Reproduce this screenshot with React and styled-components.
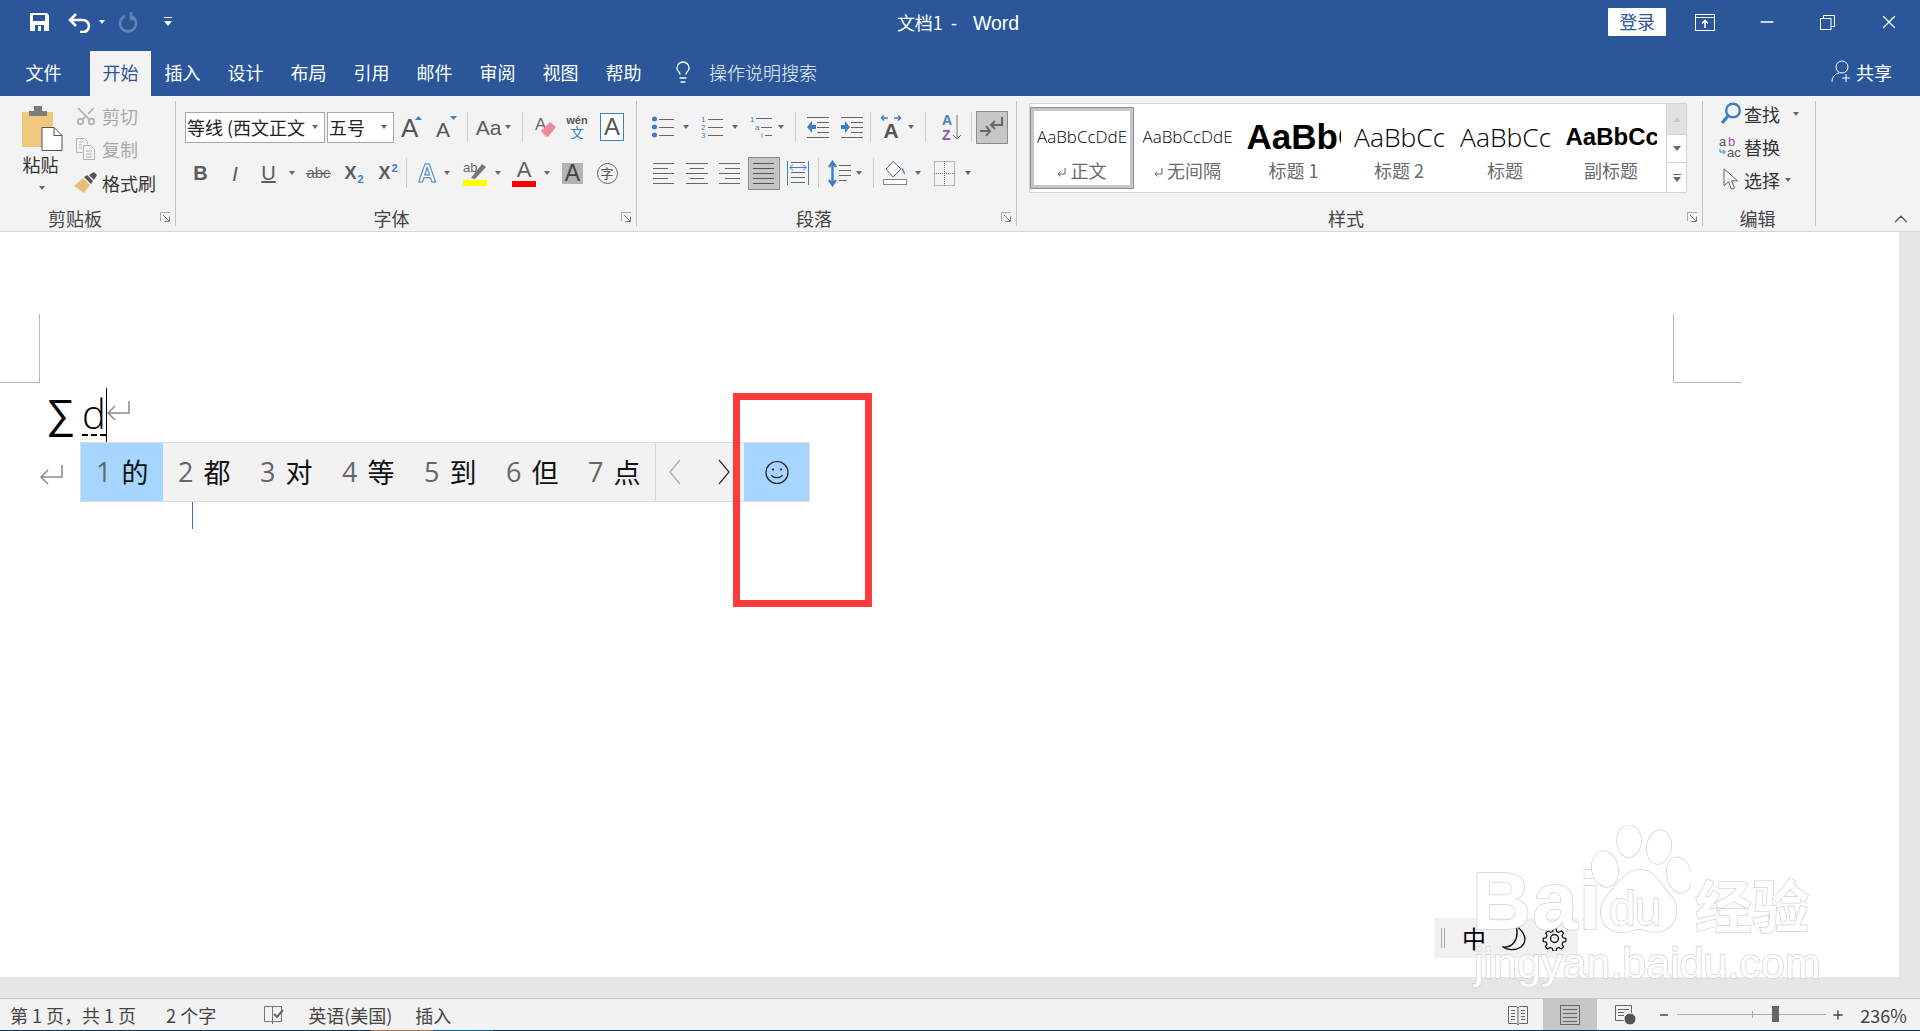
import React from "react";
import styled, { createGlobalStyle } from "styled-components";
import { Scissors, Lightbulb, ChevronUp, Minus, Plus, X } from "lucide-react";

const CJK = `"Noto Sans CJK SC", "Liberation Sans", sans-serif`;
const LATIN = `"Liberation Sans", "Noto Sans CJK SC", sans-serif`;
const LIGHT = `"Open Sans", "Liberation Sans", sans-serif`;
const BLUE = "#2b579a";
const GREY = "#5c5c5c";
const ACCENT = "#3f7fc1";

const GlobalStyle = createGlobalStyle`
	html, body {
		margin: 0;
		padding: 0;
		height: 100%;
		background: #fff;
		overflow: hidden;
	}
	#root {
		height: 100%;
	}
`;

const Window = styled.div`
	width: 1920px;
	height: 1031px;
	display: flex;
	flex-direction: column;
	overflow: hidden;
	font-family: ${CJK};
	color: #444;
`;

const TitleBar = styled.div`
	height: 51px;
	background: ${BLUE};
	color: #fff;
	display: grid;
	grid-template-columns: 1fr auto 1fr;
	align-items: center;
`;
const QuickAccess = styled.div`
	display: flex;
	align-items: center;
	height: 44px;
	padding-left: 29px;
	margin-top: -7px;
`;
const WindowTitle = styled.div`
	display: flex;
	align-items: baseline;
	font-size: 18px;
	margin-top: -7px;
	margin-left: -4px;
`;
const TitleDash = styled.span`
	font-family: ${LATIN};
	margin: 0 16px 0 8px;
`;
const TitleApp = styled.span`
	font-family: ${LATIN};
	font-size: 19.5px;
`;
const WindowControls = styled.div`
	display: flex;
	align-items: center;
	justify-content: flex-start;
	margin-top: -7px;
	padding-left: 589px;
`;
const LoginButton = styled.div`
	width: 58px;
	height: 28px;
	margin-top: -1px;
	border-radius: 1px;
	background: #fff;
	color: ${BLUE};
	font-size: 18px;
	line-height: 27px;
	text-align: center;
`;

const TabBar = styled.div`
	height: 45px;
	background: ${BLUE};
	display: flex;
	align-items: stretch;
	padding-left: 12px;
`;
const Tab = styled.div`
	width: ${(p) => p.$w || 63}px;
	margin-right: ${(p) => p.$mr || 0}px;
	margin-left: ${(p) => p.$ml || 0}px;
	background: ${(p) => (p.$active ? "#f3f3f3" : "transparent")};
	color: ${(p) => (p.$active ? BLUE : "#fff")};
	font-size: 18px;
	line-height: 43px;
	text-align: center;
`;
const TellMe = styled.div`
	display: flex;
	align-items: center;
	margin-left: 16px;
	color: #f2f5fa;
	font-size: 18px;
	font-weight: 300;
	gap: 14px;
	margin-top: -4px;
`;
const ShareButton = styled.div`
	margin-left: auto;
	margin-right: 28px;
	display: flex;
	align-items: center;
	gap: 3px;
	color: #fff;
	font-size: 18px;
	margin-top: -4px;
`;

const Ribbon = styled.div`
	height: 135px;
	background: #f3f3f3;
	border-bottom: 1px solid #d6d6d6;
	display: flex;
	box-sizing: content-box;
`;
const Group = styled.div`
	position: relative;
	width: ${(p) => p.$w}px;
	display: flex;
	flex-direction: column;
	flex-shrink: 0;
	&::after {
		content: "";
		position: absolute;
		top: 5px;
		bottom: 5px;
		right: 0;
		width: 1px;
		background: #c2c2c2;
	}
`;
const GroupBody = styled.div`
	height: 109px;
	padding-top: ${(p) => p.$pt ?? 14}px;
	padding-left: ${(p) => p.$pl || 0}px;
	box-sizing: border-box;
	display: ${(p) => (p.$row ? "flex" : "block")};
`;
const GroupFooter = styled.div`
	height: 26px;
	display: grid;
	grid-template-columns: 1fr auto 1fr;
	align-items: center;
	font-size: 18px;
	color: #444;
`;
const GroupLabel = styled.div`
	grid-column: 2;
	line-height: 26px;
	transform: translateX(${(p) => p.$dx || 0}px);
`;
const LauncherSlot = styled.div`
	grid-column: 3;
	justify-self: end;
	display: flex;
	margin-right: 5px;
	margin-bottom: 2px;
`;

const ToolRow = styled.div`
	height: 34px;
	display: flex;
	align-items: center;
	padding-left: ${(p) => p.$pl || 0}px;
	margin-bottom: 12px;
`;
const Tool = styled.span`
	width: ${(p) => p.$w}px;
	margin-left: ${(p) => p.$ml || 0}px;
	flex-shrink: 0;
	display: inline-flex;
	align-items: center;
	justify-content: center;
	box-sizing: border-box;
	height: ${(p) => (p.$pressed ? "33px" : "auto")};
	background: ${(p) => (p.$pressed ? "#c6c6c6" : "transparent")};
	border: ${(p) => (p.$pressed ? "1px solid #8b8b8b" : "0")};
`;
const Caret = styled.span`
	width: 0;
	height: 0;
	flex-shrink: 0;
	margin-left: ${(p) => p.$ml || 0}px;
	border-left: 3.5px solid transparent;
	border-right: 3.5px solid transparent;
	border-top: 4px solid ${(p) => p.$color || "#666"};
`;
const Sep = styled.span`
	width: 1px;
	height: 30px;
	flex-shrink: 0;
	background: #cfcfcf;
	margin-left: ${(p) => p.$ml || 0}px;
`;
const Glyph = styled.span`
	font-family: ${LATIN};
	font-size: ${(p) => p.$size || 20}px;
	font-weight: ${(p) => (p.$bold ? 700 : 400)};
	font-style: ${(p) => (p.$italic ? "italic" : "normal")};
	color: ${(p) => p.$color || GREY};
	line-height: 1;
	text-decoration: ${(p) => p.$deco || "none"};
	white-space: nowrap;
`;
const Sub = styled.span`
	font-size: 11px;
	font-weight: 700;
	color: ${ACCENT};
	position: relative;
	top: ${(p) => p.$top}px;
	margin-left: 1px;
`;
const BoxedA = styled(Glyph)`
	width: 24px;
	height: 28px;
	box-sizing: border-box;
	border: 1px solid ${ACCENT};
	background: #fff;
	text-align: center;
	line-height: 26px;
	font-size: 24px;
	color: #555;
`;
const ShadedA = styled(Glyph)`
	width: 21px;
	height: 21px;
	background: #b3b3b3;
	text-align: center;
	line-height: 21px;
	font-size: 23px;
	color: #444;
`;
const CircledChar = styled.span`
	width: 21px;
	height: 21px;
	border-radius: 50%;
	box-sizing: border-box;
	border: 1px solid #666;
	font-size: 13px;
	line-height: 18px;
	text-align: center;
	color: #555;
`;
const ColorA = styled.span`
	display: flex;
	flex-direction: column;
	align-items: center;
	width: 24px;
`;
const ColorBar = styled.span`
	width: 24px;
	height: 6px;
	background: ${(p) => p.$color};
`;
const ComboBox = styled.div`
	width: ${(p) => p.$w}px;
	height: 31px;
	margin-left: ${(p) => p.$ml || 0}px;
	box-sizing: border-box;
	border: 1px solid #a6a6a6;
	background: #fff;
	display: flex;
	align-items: center;
	justify-content: space-between;
	padding: 0 6px 0 1px;
	font-size: 18px;
	line-height: 29px;
	color: #222;
	white-space: nowrap;
	flex-shrink: 0;
`;

const PasteColumn = styled.div`
	width: 60px;
	margin-left: 12px;
	display: flex;
	flex-direction: column;
	align-items: center;
	padding-top: 6px;
	font-size: 18px;
	color: #333;
`;
const PasteLabel = styled.div`
	line-height: 24px;
	margin: 1px 3px 10px 0;
`;
const ClipList = styled.div`
	margin-left: 2px;
	display: flex;
	flex-direction: column;
`;
const ClipRow = styled.div`
	height: 33.5px;
	display: flex;
	align-items: center;
	gap: 4px;
	font-size: 18px;
	color: ${(p) => (p.$disabled ? "#a8a8a8" : "#333")};
	margin-top: -1px;
	margin-bottom: 1px;
`;
const ClipIcon = styled.span`
	width: 24px;
	display: flex;
	justify-content: center;
`;

const Gallery = styled.div`
	margin-left: 12px;
	margin-top: -7px;
	width: 658px;
	height: 90px;
	display: flex;
	box-sizing: border-box;
	border: 1px solid #d2d2d2;
	background: #fff;
`;
const StyleItem = styled.div`
	width: ${(p) => p.$w}px;
	flex-shrink: 0;
	box-sizing: border-box;
	border: ${(p) => (p.$selected ? "4px solid #c6c6c6" : "0")};
	outline: ${(p) => (p.$selected ? "1px solid #8f8f8f" : "none")};
	outline-offset: -1px;
	margin-top: ${(p) => (p.$selected ? "3px" : "0")};
	height: ${(p) => (p.$selected ? "82px" : "100%")};
	padding-top: ${(p) => (p.$selected ? "11px" : "18px")};
	text-align: center;
	overflow: hidden;
`;
const StyleSample = styled.div`
	font-family: ${(p) => (p.$bold ? LATIN : LIGHT)};
	font-size: ${(p) => p.$size}px;
	font-weight: ${(p) => (p.$bold ? 700 : 300)};
	color: #000;
	height: 30px;
	line-height: 30px;
	white-space: nowrap;
	overflow: hidden;
	width: ${(p) => p.$clip || 92}px;
	margin: 0 auto;
	text-align: left;
`;
const StyleLabel = styled.div`
	font-size: 18px;
	line-height: 26px;
	margin-top: 5px;
	color: #6a6a6a;
	white-space: nowrap;
`;
const GalleryScroll = styled.div`
	margin-left: auto;
	width: 20px;
	display: flex;
	flex-direction: column;
	flex-shrink: 0;
`;
const ScrollCell = styled.div`
	height: ${(p) => p.$h}px;
	box-sizing: border-box;
	display: flex;
	flex-direction: column;
	align-items: center;
	justify-content: center;
	gap: 2px;
	border-left: 1px solid #d2d2d2;
	border-bottom: ${(p) => (p.$last ? "0" : "1px solid #d2d2d2")};
	background: ${(p) => (p.$disabled ? "#e2e2e2" : "#fff")};
`;
const TriUp = styled.span`
	border-left: 4px solid transparent;
	border-right: 4px solid transparent;
	border-bottom: 5px solid #c8c8c8;
`;
const TriDown = styled(Caret)`
	border-left-width: 4px;
	border-right-width: 4px;
	border-top-width: 5px;
`;
const Dash = styled.span`
	width: 8px;
	height: 1px;
	background: #666;
`;

const EditList = styled.div`
	display: flex;
	flex-direction: column;
	margin-left: 14px;
`;
const EditRow = styled.div`
	height: 33px;
	display: flex;
	align-items: center;
	font-size: 18px;
	color: #333;
`;
const EditIcon = styled.span`
	width: 27px;
	display: flex;
	justify-content: center;
`;
const CollapseSlot = styled.div`
	margin-left: auto;
	align-self: flex-end;
	margin-right: 8px;
	margin-bottom: 1px;
	display: flex;
	color: #555;
`;

const DocArea = styled.div`
	flex: 1;
	display: flex;
	flex-direction: column;
	min-height: 0;
	position: relative;
`;
const DocMain = styled.div`
	flex: 1;
	display: flex;
	min-height: 0;
`;
const Page = styled.div`
	flex: 1;
	background: #fff;
	padding: 166px 0 0 46px;
	box-sizing: border-box;
`;
const ScrollGutter = styled.div`
	width: 21px;
	background: #e6e6e6;
`;
const BottomGutter = styled.div`
	height: 21px;
	background: #e6e6e6;
`;
const CropMark = styled.div`
	position: absolute;
	top: 82px;
	width: 40px;
	height: 69px;
	box-sizing: border-box;
	border-bottom: 1px solid #b8b8b8;
	${(p) =>
		p.$right
			? "left: 1673px; width: 69px; border-left: 1px solid #b8b8b8;"
			: "left: 0; border-right: 1px solid #b8b8b8;"}
`;
const MathLine = styled.div`
	display: flex;
	align-items: flex-start;
	height: 52px;
`;
const Sigma = styled.span`
	font-family: ${LATIN};
	font-size: 41px;
	line-height: 33px;
	color: #000;
	width: 36px;
`;
const Composing = styled.span`
	font-family: ${LIGHT};
	font-weight: 300;
	font-size: 40px;
	line-height: 31px;
	color: #000;
	width: 24px;
	height: 38px;
	box-sizing: border-box;
	border-bottom: 2px dashed #000;
	text-align: center;
`;
const Caretbar = styled.span`
	width: 1px;
	height: 54px;
	background: #000;
	margin-top: -10px;
`;
const ReturnMark = styled.span`
	display: flex;
	margin-left: ${(p) => p.$ml || 0}px;
	margin-top: ${(p) => p.$mt || 0}px;
`;
const ImeReturnSlot = styled.div`
	position: absolute;
	left: 40px;
	top: 233px;
	display: flex;
`;
const ImeBar = styled.div`
	position: absolute;
	left: 80px;
	top: 210px;
	height: 60px;
	width: 730px;
	box-sizing: border-box;
	display: flex;
	background: #f2f2f2;
	border: 1px solid #dedede;
`;
const Candidate = styled.div`
	width: ${(p) => p.$w || 82}px;
	flex-shrink: 0;
	box-sizing: border-box;
	padding-left: ${(p) => p.$pl ?? 15}px;
	background: ${(p) => (p.$active ? "#a6d6ff" : "transparent")};
	display: flex;
	align-items: center;
	gap: 10px;
	font-size: 27px;
	line-height: 54px;
	color: #111;
`;
const CandidateNum = styled.span`
	font-family: "Open Sans", ${LATIN};
	color: #666;
`;
const Pager = styled.div`
	width: 89px;
	flex-shrink: 0;
	display: flex;
	align-items: center;
	justify-content: space-between;
	padding: 0 14px 0 13px;
	box-sizing: border-box;
	border-left: 1px solid #d9d9d9;
`;
const EmojiButton = styled.div`
	width: 65px;
	margin-left: auto;
	background: #a6d6ff;
	display: flex;
	align-items: center;
	justify-content: center;
`;
const NextLine = styled.div`
	position: absolute;
	left: 192px;
	top: 270px;
	width: 1px;
	height: 27px;
	background: #3a6cc0;
`;
const RedFrame = styled.div`
	position: absolute;
	left: 733px;
	top: 161px;
	width: 139px;
	height: 214px;
	box-sizing: border-box;
	border: 7px solid #ff3b3b;
`;
const LangBar = styled.div`
	position: absolute;
	left: 1434px;
	top: 686px;
	width: 144px;
	height: 40px;
	display: flex;
	align-items: center;
	background: #f1f1f1;
	padding-left: 7px;
	box-sizing: border-box;
	color: #000;
`;
const Grip = styled.span`
	width: 2px;
	height: 20px;
	border-left: 1px solid #aaa;
	border-right: 1px solid #aaa;
	margin-right: 17px;
`;
const LangChar = styled.span`
	font-size: 24px;
	line-height: 1;
	margin-right: 16px;
`;
const Watermark = styled.div`
	position: absolute;
	left: 1472px;
	top: 593px;
	width: 352px;
	pointer-events: none;
	color: #fff;
	font-family: ${LATIN};
	-webkit-text-stroke: 1.5px #d2d2d2;
	paint-order: stroke fill;
`;
const MarkTop = styled.div`
	display: flex;
	align-items: flex-end;
	height: 112px;
`;
const MarkBai = styled.span`
	font-size: 82px;
	line-height: 72px;
	font-weight: 700;
	width: 119px;
	letter-spacing: 1px;
`;
const MarkPaw = styled.span`
	position: relative;
	width: 100px;
	height: 112px;
	display: flex;
	justify-content: center;
`;
const MarkDu = styled.span`
	position: absolute;
	left: 18px;
	bottom: 3px;
	font-size: 48px;
	line-height: 50px;
	letter-spacing: -1px;
`;
const MarkCn = styled.span`
	font-family: ${CJK};
	font-weight: 700;
	font-size: 57px;
	line-height: 68px;
	margin-left: 4px;
	white-space: nowrap;
`;
const MarkDomain = styled.div`
	font-size: 43px;
	line-height: 46px;
	margin: 3px 0 0 2px;
	white-space: nowrap;
`;

const StatusBar = styled.div`
	height: 32px;
	box-sizing: border-box;
	background: #f2f2f2;
	border-top: 1px solid #c6c6c6;
	display: flex;
	align-items: stretch;
	font-size: 18px;
	color: #444;
`;
const StatusText = styled.span`
	margin-left: ${(p) => p.$ml || 0}px;
	display: flex;
	align-items: center;
	white-space: pre;
`;
const StatusIcon = styled.span`
	margin-left: ${(p) => p.$ml || 0}px;
	display: flex;
	align-items: center;
`;
const ViewButton = styled.span`
	width: 54px;
	margin-left: ${(p) => p.$ml || 0}px;
	background: ${(p) => (p.$active ? "#c6c6c6" : "transparent")};
	display: flex;
	align-items: center;
	justify-content: center;
`;
const ZoomTrack = styled.span`
	width: 149px;
	margin-left: 7px;
	height: 100%;
	display: flex;
	align-items: center;
	position: relative;
	&::before {
		content: "";
		width: 100%;
		height: 1px;
		background: #aaa;
	}
`;
const ZoomTick = styled.span`
	position: absolute;
	left: 75px;
	top: 12px;
	width: 1px;
	height: 7px;
	background: #aaa;
`;
const ZoomThumb = styled.span`
	position: absolute;
	left: 95px;
	top: 7px;
	width: 7px;
	height: 16px;
	background: #666;
`;
const TaskStrip = styled.div`
	height: 1px;
	display: flex;
	background: #0d3350;
`;
const StripPart = styled.span`
	width: ${(p) => p.$w}px;
	margin-left: ${(p) => p.$ml || 0}px;
	background: ${(p) => p.$color};
`;

const Lines = ({ w = 22, h = 22, rows, color = "#666" }) => (
	<svg width={w} height={h} viewBox={`0 0 ${w} ${h}`}>
		{rows.map(([x1, x2, y], i) => (
			<line key={i} x1={x1} x2={x2} y1={y + 0.5} y2={y + 0.5} stroke={color} />
		))}
	</svg>
);
const alignRows = (a, b) => [[a, 21, 1], [b, 21, 6], [a, 21, 11], [b, 21, 16], [a, 21, 21]];

const SvgText = ({ x, y, size, fill = GREY, weight = 400, children, anchor = "start" }) => (
	<text x={x} y={y} fontSize={size} fill={fill} fontWeight={weight} textAnchor={anchor} fontFamily={`"Liberation Sans", sans-serif`}>
		{children}
	</text>
);

const SaveIcon = () => (
	<svg width="21" height="20" viewBox="0 0 21 20">
		<path d="M1 1h17l2 2v16H1z" fill="#fff" />
		<rect x="4" y="3" width="12" height="6" fill={BLUE} />
		<rect x="6" y="13" width="9" height="6" fill={BLUE} />
		<rect x="9" y="14" width="3" height="5" fill="#fff" />
	</svg>
);
const UndoIcon = () => (
	<svg width="24" height="21" viewBox="0 0 24 21" fill="none" stroke="#fff" strokeWidth="2.6">
		<path d="M8 2 2 8l6 6" />
		<path d="M3 8h12a6 6 0 0 1 0 12h-3" />
	</svg>
);
const RedoIcon = () => (
	<svg width="20" height="21" viewBox="0 0 20 21" fill="none" stroke="#5f82b5" strokeWidth="2.6">
		<path d="M7 4a8 8 0 1 0 6 0" />
		<path d="M13 0v7h5" />
	</svg>
);
const QuickCaret = () => (
	<svg width="8" height="10" viewBox="0 0 8 10">
		<rect y="0" width="8" height="1" fill="#fff" />
		<path d="M0 4h8L4 9z" fill="#fff" />
	</svg>
);
const RibbonDisplayIcon = () => (
	<svg width="20" height="17" viewBox="0 0 20 17" fill="none" stroke="#fff">
		<rect x="0.5" y="0.5" width="19" height="16" />
		<path d="M0 3.5h20" />
		<path d="M10 14V7M7 9.5 10 6.5l3 3" strokeWidth="1.6" />
	</svg>
);
const MinIcon = () => <Minus size={20} color="#fff" strokeWidth={1.4} absoluteStrokeWidth />;
const RestoreIcon = () => (
	<svg width="15" height="15" viewBox="0 0 15 15" fill="none" stroke="#fff">
		<rect x="0.5" y="3.5" width="10.5" height="11" />
		<path d="M3.5 3V.5h11v11H11" />
	</svg>
);
const ShareIcon = () => (
	<svg width="22" height="23" viewBox="0 0 22 23" fill="none" stroke="#fff">
		<circle cx="11" cy="7" r="6" />
		<path d="M1 22c0-5 3-8 7-9M15 14v8M11 18h8" />
	</svg>
);
const Launcher = () => (
	<svg width="11" height="10" viewBox="0 0 11 10" fill="none" stroke="#777">
		<path d="M.5 9V.5H10" stroke="#aaa" />
		<path d="M3 3 9 9M4.5 9.5H9.5V4.5" />
	</svg>
);
const PasteIcon = () => (
	<svg width="42" height="45" viewBox="0 0 42 45">
		<path d="M1 6h31v35H1z" fill="#edc87e" />
		<path d="M8 5h5V0h8v5h5v5H8z" fill="#7c7c7c" />
		<path d="M21 21.500h12l8 8V44.500H21z" fill="#fff" stroke="#555" />
		<path d="M33 21.500v8h8" fill="none" stroke="#555" />
	</svg>
);
const CopyIcon = () => (
	<svg width="20" height="22" viewBox="0 0 20 22" fill="none" stroke="#b4b4b4">
		<path d="M.5.500h8l3 3v3M.5.500v14h6" />
		<path d="M7.500 7.500h7l4 4v10h-11z" fill="#f3f3f3" />
		<path d="M3 4h4M3 7h3M3 10h3M10 13h6M10 16h6M10 19h6" />
	</svg>
);
const BrushIcon = () => (
	<svg width="24" height="21" viewBox="0 0 24 21">
		<path d="M0 14 9 6l7 7-6 8z" fill="#e8bf74" />
		<path d="M10 5l3-2 6 6-2 3z" fill="#555" />
		<path d="M15 3l5-3 3 3-3 5z" fill="#555" />
	</svg>
);
const GrowA = ({ up, size }) => (
	<svg width="22" height="22" viewBox="0 0 22 22">
		<SvgText x={0} y={21} size={size} fill="#555">A</SvgText>
		<path d={up ? "M14 4h7l-3.500-4z" : "M14 0h7l-3.500 4z"} fill={ACCENT} />
	</svg>
);
const EraserIcon = () => (
	<svg width="21" height="22" viewBox="0 0 21 22">
		<SvgText x={0} y={14} size={17} fill="#666">A</SvgText>
		<path d="M6 15 15 6l6 5-8 10h-3z" fill="#ee8a9a" />
		<path d="M6 15l4 6h3" fill="#f6c2ca" />
	</svg>
);
const WenIcon = () => (
	<svg width="22" height="24" viewBox="0 0 22 24">
		<SvgText x={11} y={9} size={11} anchor="middle" fill="#555" weight={700}>wén</SvgText>
		<text x="11" y="23" fontSize="14" fill={ACCENT} textAnchor="middle" fontFamily={`"Noto Sans CJK SC"`}>文</text>
	</svg>
);
const AbcIcon = () => (
	<svg width="25" height="16" viewBox="0 0 25 16">
		<SvgText x={12.5} y={13} size={15} anchor="middle" fill="#666">abc</SvgText>
		<line x1="0" x2="25" y1="8.500" y2="8.500" stroke="#555" />
	</svg>
);
const EffectA = () => (
	<svg width="20" height="24" viewBox="0 0 20 24">
		<text x="10" y="21" fontSize="25" textAnchor="middle" fontWeight="700" fill="#fff" stroke={ACCENT} strokeWidth="1" fontFamily={`"Liberation Sans"`}>A</text>
	</svg>
);
const HighlightIcon = () => (
	<ColorA>
		<svg width="24" height="19" viewBox="0 0 24 19">
			<SvgText x={0} y={11} size={13} fill="#666">ab</SvgText>
			<path d="M8 17 19 3l4 3-11 12z" fill="#777" />
		</svg>
		<ColorBar $color="#ffff00" />
	</ColorA>
);
const BulletsIcon = () => (
	<svg width="22" height="22" viewBox="0 0 22 22">
		<circle cx="2.500" cy="3" r="2.500" fill={ACCENT} />
		<circle cx="2.500" cy="11" r="2.500" fill={ACCENT} />
		<circle cx="2.500" cy="19" r="2.500" fill={ACCENT} />
		<path d="M7 3.500h15M7 11.500h15M7 19.500h15" stroke="#666" />
	</svg>
);
const NumbersIcon = () => (
	<svg width="22" height="24" viewBox="0 0 22 24">
		<SvgText x={0} y={7} size={8} fill={ACCENT}>1</SvgText>
		<SvgText x={0} y={15} size={8} fill={ACCENT}>2</SvgText>
		<SvgText x={0} y={23} size={8} fill={ACCENT}>3</SvgText>
		<path d="M7 4.500h15M7 12.500h15M7 20.500h15" stroke="#666" />
	</svg>
);
const MultiIcon = () => (
	<svg width="22" height="24" viewBox="0 0 22 24">
		<SvgText x={0} y={7} size={8} fill={ACCENT}>1</SvgText>
		<SvgText x={5} y={15} size={8} fill={ACCENT}>a</SvgText>
		<SvgText x={11} y={23} size={8} fill={ACCENT}>i</SvgText>
		<path d="M6 3.500h16M11 12.500h11M15 20.500h7" stroke="#666" />
	</svg>
);
const IndentIcon = ({ flip }) => (
	<svg width="22" height="22" viewBox="0 0 22 22">
		<path d="M0 1.500h22M10 6.500h12M10 11.500h12M10 16.500h12M0 21.500h22" stroke="#666" />
		<path d={flip ? "M0 9h4V5l5 6-5 6v-4H0z" : "M9 9H5V5l-5 6 5 6v-4h4z"} fill={ACCENT} />
	</svg>
);
const SpacingAIcon = () => (
	<svg width="24" height="24" viewBox="0 0 24 24">
		<SvgText x={12} y={23} size={21} anchor="middle" weight={700} fill="#555">A</SvgText>
		<path d="M9 3H3M5 .5 2.500 3 5 5.500M15 3h6M19 .5 21.500 3 19 5.500" stroke={ACCENT} fill="none" strokeWidth="1.5" />
	</svg>
);
const SortIcon = () => (
	<svg width="20" height="28" viewBox="0 0 20 28">
		<SvgText x={0} y={12} size={14} weight={700} fill={ACCENT}>A</SvgText>
		<SvgText x={0} y={27} size={14} weight={700} fill="#8a5aa8">Z</SvgText>
		<path d="M15 2v24M11 22l4 4 4-4" stroke="#777" fill="none" />
	</svg>
);
const PilcrowIcon = () => (
	<svg width="24" height="22" viewBox="0 0 24 22" fill="none" stroke="#666" strokeWidth="2">
		<path d="M22 1v8H11M15 5l-4 4 4 4" />
		<path d="M0 15h10M6 10l4 5-4 5" />
	</svg>
);
const DistributeIcon = () => (
	<svg width="22" height="24" viewBox="0 0 22 24">
		<path d="M4 1.500h14M4 11.500h14M4 16.500h14M4 21.500h14" stroke="#666" />
		<path d="M.500 0v24M21.500 0v24" stroke={ACCENT} />
		<path d="M3 6.500h16M6 3.500l-3 3 3 3M16 3.500l3 3-3 3" stroke={ACCENT} fill="none" />
	</svg>
);
const LineSpacingIcon = () => (
	<svg width="23" height="27" viewBox="0 0 23 27">
		<path d="M4.500 3v21M1 7l3.500-5L8 7M1 20l3.500 5L8 20" stroke={ACCENT} strokeWidth="2.400" fill="none" />
		<path d="M11 5.500h12M11 10.500h12M11 15.500h12M11 20.500h8" stroke="#666" />
	</svg>
);
const ShadingIcon = () => (
	<svg width="24" height="24" viewBox="0 0 24 24">
		<path d="M10 .5 3 8l7 8 8-8z" fill="#fff" stroke="#666" />
		<path d="M18 6c3 2 4 5 4 8-2-2-3-5-4-8z" fill={ACCENT} />
		<rect x="0.500" y="18.500" width="23" height="5" fill="#fff" stroke="#888" />
	</svg>
);
const BordersIcon = () => (
	<svg width="21" height="25" viewBox="0 0 21 25" fill="none" stroke="#777" strokeDasharray="1 1">
		<rect x="0.500" y="0.500" width="20" height="24" />
		<path d="M10.500 0v25M0 12.500h21" />
	</svg>
);
const ReturnSmall = () => (
	<svg width="9" height="10" viewBox="0 0 9 10" fill="none" stroke="#666">
		<path d="M8 0v6H1M3.500 3.500 1 6l2.500 2.500" />
	</svg>
);
const FindIcon = () => (
	<svg width="22" height="23" viewBox="0 0 22 23" fill="none" stroke={ACCENT}>
		<circle cx="13" cy="8.500" r="6.800" strokeWidth="2.400" />
		<path d="M8 14 2 21" strokeWidth="3.200" />
	</svg>
);
const ReplaceIcon = () => (
	<svg width="24" height="22" viewBox="0 0 24 22">
		<SvgText x={0} y={10} size={13} fill="#555">a</SvgText>
		<SvgText x={9} y={10} size={13} fill="#8a5aa8">b</SvgText>
		<SvgText x={8} y={21} size={13} fill="#555">ac</SvgText>
		<path d="M1 13v3h5M4 14l2.500 2L4 18" stroke={ACCENT} fill="none" />
	</svg>
);
const CursorIcon = () => (
	<svg width="15" height="23" viewBox="0 0 15 23" fill="#f3f3f3" stroke="#666">
		<path d="M1 .8v17l4.500-4 3 7.500 3-1.200-3-7.300h6z" />
	</svg>
);
const ReturnArrow = ({ w = 23, h = 20, color = "#8a8a8a" }) => (
	<svg width={w} height={h} viewBox="0 0 23 20" fill="none" stroke={color} strokeWidth="1.500">
		<path d="M22 0v12H1M8 5l-7 7 7 7" />
	</svg>
);
const PageArrow = ({ right }) => (
	<svg width="12" height="26" viewBox="0 0 12 26" fill="none" stroke={right ? "#333" : "#aaa"} strokeWidth="1.300">
		<path d={right ? "M1 1l10 12L1 25" : "M11 1 1 13l10 12"} />
	</svg>
);
const Smiley = () => (
	<svg width="24" height="25" viewBox="0 0 24 25" fill="none" stroke="#222" strokeWidth="1.200">
		<circle cx="12" cy="12.500" r="11" />
		<circle cx="8" cy="9.500" r="1.100" fill="#222" stroke="none" />
		<circle cx="16" cy="9.500" r="1.100" fill="#222" stroke="none" />
		<path d="M6.500 15c1.500 3.500 9.500 3.500 11 0" />
	</svg>
);
const MoonIcon = () => (
	<svg width="25" height="26" viewBox="0 0 25 26" fill="none" stroke="#111" strokeWidth="1.400">
		<path d="M14 1c9 6 12 15 5 21-6 4-14 3-18 0 8 1 17-6 13-21z" />
	</svg>
);
const GearIcon = () => (
	<svg width="25" height="25" viewBox="0 0 24 24" fill="none" stroke="#111" strokeWidth="1.300">
		<circle cx="12" cy="12" r="3.800" />
		<path d="M10.300 1.500h3.400l.6 3 2.400 1 2.600-1.700 2.400 2.400-1.700 2.600 1 2.400 3 .6v3.400l-3 .6-1 2.400 1.700 2.600-2.400 2.400-2.600-1.700-2.400 1-.6 3h-3.400l-.6-3-2.400-1-2.600 1.700-2.400-2.400 1.700-2.600-1-2.400-3-.6v-3.400l3-.6 1-2.400L2.700 6.200l2.400-2.400 2.600 1.700 2.400-1z" transform="translate(1.200 1.200) scale(.9)" />
	</svg>
);
const PawIcon = () => (
	<svg width="100" height="112" viewBox="0 0 100 112" fill="#fff" stroke="#d2d2d2" strokeWidth="1.500">
		<ellipse cx="38" cy="16" rx="12" ry="16" />
		<ellipse cx="68" cy="22" rx="12" ry="17" transform="rotate(8 68 22)" />
		<ellipse cx="14" cy="44" rx="13" ry="18" transform="rotate(-12 14 44)" />
		<ellipse cx="88" cy="50" rx="12" ry="18" transform="rotate(-12 88 50)" />
		<path d="M50 45c14 0 20 16 30 26 12 14 4 36-16 36-8 0-10-3-16-3s-10 4-20 3c-18-2-24-22-12-36 10-10 16-26 34-26z" />
	</svg>
);
const BookIcon = () => (
	<svg width="20" height="22" viewBox="0 0 20 22" fill="none" stroke="#666">
		<path d="M.5 2.500h8l1.500 1.500 1.500-1.500h8v17h-8L10 21l-1.500-1.500h-8zM10 4v17" />
		<path d="M3 6.500h4M3 9.500h4M3 12.500h4M3 15.500h4M13 6.500h4M13 9.500h4M13 12.500h4M13 15.500h4" />
	</svg>
);
const PrintPageIcon = () => (
	<svg width="20" height="20" viewBox="0 0 20 20" fill="none" stroke="#666">
		<rect x="0.500" y="0.500" width="19" height="19" />
		<path d="M3 4.500h14M3 8.500h14M3 12.500h14M3 16.500h14" />
	</svg>
);
const WebPageIcon = () => (
	<svg width="21" height="20" viewBox="0 0 21 20">
		<path d="M.5.500h16v15H.5zM3 4.500h11M3 7.500h6M3 10.500h6" fill="none" stroke="#666" />
		<circle cx="15" cy="14" r="6" fill="#555" stroke="#f2f2f2" />
	</svg>
);
const ProofIcon = () => (
	<svg width="21" height="20" viewBox="0 0 21 20" fill="none" stroke="#777">
		<path d="M.5 1.500h8v15h-8zM8.500 1.500h9v15h-9zM8.500 16v3" />
		<path d="M10 9l3 3 6-7" stroke="#666" strokeWidth="2" />
	</svg>
);

const candidates = ["都", "对", "等", "到", "但", "点"];

export default function App() {
	return (
		<Window>
			<GlobalStyle />
			<TitleBar>
				<QuickAccess>
					<SaveIcon />
					<Tool $w={24} $ml={18}><UndoIcon /></Tool>
					<Caret $ml={7} $color="#fff" />
					<Tool $w={20} $ml={13}><RedoIcon /></Tool>
					<Tool $w={8} $ml={26}><QuickCaret /></Tool>
				</QuickAccess>
				<WindowTitle>
					文档1<TitleDash>-</TitleDash><TitleApp>Word</TitleApp>
				</WindowTitle>
				<WindowControls>
					<LoginButton>登录</LoginButton>
					<Tool $w={20} $ml={29}><RibbonDisplayIcon /></Tool>
					<Tool $w={20} $ml={42}><MinIcon /></Tool>
					<Tool $w={15} $ml={43}><RestoreIcon /></Tool>
					<Tool $w={24} $ml={42}><X size={22} color="#fff" strokeWidth={1.4} /></Tool>
				</WindowControls>
			</TitleBar>

			<TabBar>
				<Tab>文件</Tab>
				<Tab $active $w={61} $ml={15} $mr={0}>开始</Tab>
				<Tab>插入</Tab>
				<Tab>设计</Tab>
				<Tab>布局</Tab>
				<Tab>引用</Tab>
				<Tab>邮件</Tab>
				<Tab>审阅</Tab>
				<Tab>视图</Tab>
				<Tab>帮助</Tab>
				<TellMe>
					<Lightbulb size={24} color="#fff" strokeWidth={1.3} />
					操作说明搜索
				</TellMe>
				<ShareButton>
					<ShareIcon />
					共享
				</ShareButton>
			</TabBar>

			<Ribbon>
				<Group $w={176}>
					<GroupBody $row $pt={4}>
						<PasteColumn>
							<PasteIcon />
							<PasteLabel>粘贴</PasteLabel>
							<Caret />
						</PasteColumn>
						<ClipList>
							<ClipRow $disabled>
								<ClipIcon><Scissors size={22} color="#b4b4b4" style={{ transform: "rotate(-90deg)" }} /></ClipIcon>
								剪切
							</ClipRow>
							<ClipRow $disabled>
								<ClipIcon><CopyIcon /></ClipIcon>
								复制
							</ClipRow>
							<ClipRow>
								<ClipIcon><BrushIcon /></ClipIcon>
								格式刷
							</ClipRow>
						</ClipList>
					</GroupBody>
					<GroupFooter>
						<GroupLabel $dx={-13}>剪贴板</GroupLabel>
						<LauncherSlot><Launcher /></LauncherSlot>
					</GroupFooter>
				</Group>

				<Group $w={461}>
					<GroupBody>
						<ToolRow $pl={9}>
							<ComboBox $w={140}>等线 (西文正文<Caret /></ComboBox>
							<ComboBox $w={67} $ml={2}>五号<Caret /></ComboBox>
							<Tool $w={22} $ml={7}><GrowA up size={26} /></Tool>
							<Tool $w={22} $ml={13}><GrowA size={21} /></Tool>
							<Sep $ml={9} />
							<Tool $w={25} $ml={8}><Glyph $size={21}>Aa</Glyph></Tool>
							<Caret $ml={4} />
							<Sep $ml={11} />
							<Tool $w={21} $ml={12}><EraserIcon /></Tool>
							<Tool $w={22} $ml={10}><WenIcon /></Tool>
							<Tool $w={24} $ml={12}><BoxedA>A</BoxedA></Tool>
						</ToolRow>
						<ToolRow $pl={18}>
							<Tool $w={13}><Glyph $bold $size={20}>B</Glyph></Tool>
							<Tool $w={12} $ml={22}><Glyph $italic $size={21}>I</Glyph></Tool>
							<Tool $w={15} $ml={20}><Glyph $deco="underline" $size={20}>U</Glyph></Tool>
							<Caret $ml={13} />
							<Tool $w={25} $ml={11}><AbcIcon /></Tool>
							<Tool $w={20} $ml={13}><Glyph $bold $size={18}>X<Sub $top={4}>2</Sub></Glyph></Tool>
							<Tool $w={18} $ml={15}><Glyph $bold $size={18}>X<Sub $top={-7}>2</Sub></Glyph></Tool>
							<Sep $ml={9} />
							<Tool $w={20} $ml={10}><EffectA /></Tool>
							<Caret $ml={7} />
							<Tool $w={24} $ml={13}><HighlightIcon /></Tool>
							<Caret $ml={8} />
							<Tool $w={24} $ml={11}>
								<ColorA>
									<Glyph $size={22}>A</Glyph>
									<ColorBar $color="#ff0000" />
								</ColorA>
							</Tool>
							<Caret $ml={8} />
							<Tool $w={21} $ml={12}><ShadedA>A</ShadedA></Tool>
							<Tool $w={22} $ml={13}><CircledChar>字</CircledChar></Tool>
						</ToolRow>
					</GroupBody>
					<GroupFooter>
						<GroupLabel $dx={-15}>字体</GroupLabel>
						<LauncherSlot><Launcher /></LauncherSlot>
					</GroupFooter>
				</Group>

				<Group $w={380}>
					<GroupBody>
						<ToolRow $pl={15}>
							<Tool $w={22}><BulletsIcon /></Tool>
							<Caret $ml={9} />
							<Tool $w={22} $ml={12}><NumbersIcon /></Tool>
							<Caret $ml={9} />
							<Tool $w={22} $ml={12}><MultiIcon /></Tool>
							<Caret $ml={6} />
							<Sep $ml={11} />
							<Tool $w={22} $ml={11}><IndentIcon /></Tool>
							<Tool $w={22} $ml={12}><IndentIcon flip /></Tool>
							<Sep $ml={7} />
							<Tool $w={24} $ml={8}><SpacingAIcon /></Tool>
							<Caret $ml={5} />
							<Sep $ml={11} />
							<Tool $w={20} $ml={16}><SortIcon /></Tool>
							<Sep $ml={9} />
							<Tool $w={32} $ml={4} $pressed><PilcrowIcon /></Tool>
						</ToolRow>
						<ToolRow $pl={16}>
							<Tool $w={22}><Lines rows={alignRows(0, 0).map(([a, b, y], i) => [0, i % 2 ? 15 : 21, y])} /></Tool>
							<Tool $w={22} $ml={11}><Lines rows={alignRows(0, 0).map(([a, b, y], i) => (i % 2 ? [4, 18, y] : [0, 22, y]))} /></Tool>
							<Tool $w={22} $ml={11}><Lines rows={alignRows(0, 6)} /></Tool>
							<Tool $w={32} $ml={7} $pressed><Lines rows={alignRows(0, 0)} color="#555" /></Tool>
							<Tool $w={22} $ml={7}><DistributeIcon /></Tool>
							<Sep $ml={9} />
							<Tool $w={23} $ml={9}><LineSpacingIcon /></Tool>
							<Caret $ml={5} />
							<Sep $ml={11} />
							<Tool $w={24} $ml={9}><ShadingIcon /></Tool>
							<Caret $ml={8} />
							<Tool $w={21} $ml={13}><BordersIcon /></Tool>
							<Caret $ml={10} />
						</ToolRow>
					</GroupBody>
					<GroupFooter>
						<GroupLabel $dx={-13}>段落</GroupLabel>
						<LauncherSlot><Launcher /></LauncherSlot>
					</GroupFooter>
				</Group>

				<Group $w={686}>
					<GroupBody>
						<Gallery>
							<StyleItem $w={104} $selected>
								<StyleSample $size={17} $clip={90}>AaBbCcDdE</StyleSample>
								<StyleLabel><ReturnSmall /> 正文</StyleLabel>
							</StyleItem>
							<StyleItem $w={107}>
								<StyleSample $size={17} $clip={90}>AaBbCcDdE</StyleSample>
								<StyleLabel><ReturnSmall /> 无间隔</StyleLabel>
							</StyleItem>
							<StyleItem $w={105}>
								<StyleSample $size={35} $bold $clip={94}>AaBbC</StyleSample>
								<StyleLabel>标题 1</StyleLabel>
							</StyleItem>
							<StyleItem $w={106}>
								<StyleSample $size={26.5} $clip={90}>AaBbCc</StyleSample>
								<StyleLabel>标题 2</StyleLabel>
							</StyleItem>
							<StyleItem $w={106}>
								<StyleSample $size={26.5} $clip={90}>AaBbCc</StyleSample>
								<StyleLabel>标题</StyleLabel>
							</StyleItem>
							<StyleItem $w={106}>
								<StyleSample $size={24} $bold $clip={91}>AaBbCc</StyleSample>
								<StyleLabel>副标题</StyleLabel>
							</StyleItem>
							<GalleryScroll>
								<ScrollCell $h={31} $disabled><TriUp /></ScrollCell>
								<ScrollCell $h={28}><TriDown /></ScrollCell>
								<ScrollCell $h={29} $last><Dash /><TriDown /></ScrollCell>
							</GalleryScroll>
						</Gallery>
					</GroupBody>
					<GroupFooter>
						<GroupLabel $dx={-14}>样式</GroupLabel>
						<LauncherSlot><Launcher /></LauncherSlot>
					</GroupFooter>
				</Group>

				<Group $w={113}>
					<GroupBody $pt={1}>
						<EditList>
							<EditRow>
								<EditIcon><FindIcon /></EditIcon>
								查找
								<Caret $ml={13} />
							</EditRow>
							<EditRow>
								<EditIcon><ReplaceIcon /></EditIcon>
								替换
							</EditRow>
							<EditRow>
								<EditIcon><CursorIcon /></EditIcon>
								选择
								<Caret $ml={5} />
							</EditRow>
						</EditList>
					</GroupBody>
					<GroupFooter>
						<GroupLabel $dx={-2}>编辑</GroupLabel>
					</GroupFooter>
				</Group>

				<CollapseSlot><ChevronUp size={22} strokeWidth={1.4} /></CollapseSlot>
			</Ribbon>

			<DocArea>
				<DocMain>
					<Page>
						<MathLine>
							<Sigma>∑</Sigma>
							<Composing>d</Composing>
							<Caretbar />
							<ReturnMark $mt={3}><ReturnArrow /></ReturnMark>
						</MathLine>
					</Page>
					<ScrollGutter />
				</DocMain>
				<BottomGutter />
				<CropMark />
				<CropMark $right />
				<ImeReturnSlot><ReturnArrow /></ImeReturnSlot>
				<ImeBar>
					<Candidate $active><CandidateNum>1</CandidateNum>的</Candidate>
					{candidates.map((ch, i) => (
						<Candidate key={ch}>
							<CandidateNum>{i + 2}</CandidateNum>
							{ch}
						</Candidate>
					))}
					<Pager>
						<PageArrow />
						<PageArrow right />
					</Pager>
					<EmojiButton><Smiley /></EmojiButton>
				</ImeBar>
				<NextLine />
				<RedFrame />
				<LangBar>
					<Grip />
					<LangChar>中</LangChar>
					<Tool $w={25}><MoonIcon /></Tool>
					<Tool $w={25} $ml={15}><GearIcon /></Tool>
				</LangBar>
				<Watermark>
					<MarkTop>
						<MarkBai>Bai</MarkBai>
						<MarkPaw>
							<PawIcon />
							<MarkDu>du</MarkDu>
						</MarkPaw>
						<MarkCn>经验</MarkCn>
					</MarkTop>
					<MarkDomain>jingyan.baidu.com</MarkDomain>
				</Watermark>
			</DocArea>

			<StatusBar>
				<StatusText $ml={10}>第 1 页，共 1 页</StatusText>
				<StatusText $ml={30}>2 个字</StatusText>
				<StatusIcon $ml={48}><ProofIcon /></StatusIcon>
				<StatusText $ml={23}>英语(美国)</StatusText>
				<StatusText $ml={23}>插入</StatusText>
				<StatusIcon $ml={1057}><BookIcon /></StatusIcon>
				<ViewButton $ml={15} $active><PrintPageIcon /></ViewButton>
				<StatusIcon $ml={18}><WebPageIcon /></StatusIcon>
				<StatusIcon $ml={22}><Minus size={12} strokeWidth={1.4} absoluteStrokeWidth /></StatusIcon>
				<ZoomTrack><ZoomTick /><ZoomThumb /></ZoomTrack>
				<StatusIcon $ml={5}><Plus size={14} strokeWidth={1.4} absoluteStrokeWidth /></StatusIcon>
				<StatusText $ml={15}>236%</StatusText>
			</StatusBar>
			<TaskStrip>
				<StripPart $ml={371} $w={62} $color="#a9744c" />
				<StripPart $w={60} $color="#0d5e93" />
			</TaskStrip>
		</Window>
	);
}
